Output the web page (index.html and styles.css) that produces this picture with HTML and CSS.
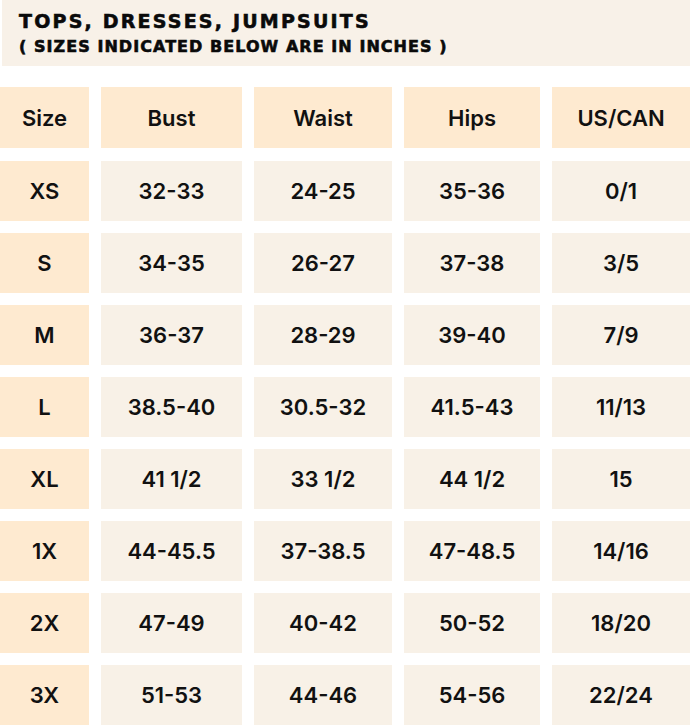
FILE: index.html
```html
<!DOCTYPE html>
<html>
<head>
<meta charset="utf-8">
<link rel="stylesheet" href="styles.css">
</head>
<body>
<div class="page">
  <div class="title">
    <div class="t1">TOPS, DRESSES, JUMPSUITS</div>
    <div class="t2">( SIZES INDICATED BELOW ARE IN INCHES )</div>
  </div>
  <div class="chart">
    <div class="cell head">Size</div><div class="cell head">Bust</div><div class="cell head">Waist</div><div class="cell head">Hips</div><div class="cell head">US/CAN</div>
    <div class="cell size">XS</div><div class="cell">32-33</div><div class="cell">24-25</div><div class="cell">35-36</div><div class="cell">0/1</div>
    <div class="cell size">S</div><div class="cell">34-35</div><div class="cell">26-27</div><div class="cell">37-38</div><div class="cell">3/5</div>
    <div class="cell size">M</div><div class="cell">36-37</div><div class="cell">28-29</div><div class="cell">39-40</div><div class="cell">7/9</div>
    <div class="cell size">L</div><div class="cell">38.5-40</div><div class="cell">30.5-32</div><div class="cell">41.5-43</div><div class="cell">11/13</div>
    <div class="cell size">XL</div><div class="cell">41 1/2</div><div class="cell">33 1/2</div><div class="cell">44 1/2</div><div class="cell">15</div>
    <div class="cell size">1X</div><div class="cell">44-45.5</div><div class="cell">37-38.5</div><div class="cell">47-48.5</div><div class="cell">14/16</div>
    <div class="cell size">2X</div><div class="cell">47-49</div><div class="cell">40-42</div><div class="cell">50-52</div><div class="cell">18/20</div>
    <div class="cell size">3X</div><div class="cell">51-53</div><div class="cell">44-46</div><div class="cell">54-56</div><div class="cell">22/24</div>
  </div>
</div>
</body>
</html>
```

FILE: styles.css
```css
html, body {
  margin: 0;
  padding: 0;
  background: #ffffff;
}
.page {
  width: 690px;
  height: 726px;
  overflow: hidden;
}
.title {
  margin-left: 2px;
  height: 66px;
  box-sizing: border-box;
  background: #f8f1e8;
  padding: 9px 0 0 17px;
  font-family: "DejaVu Sans", sans-serif;
  font-weight: bold;
  color: #0a0a0a;
  -webkit-text-stroke: 0.6px #0a0a0a;
}
.t1 {
  font-size: 19px;
  line-height: 24px;
  letter-spacing: 2.2px;
}
.t2 {
  margin-top: 3px;
  font-size: 16px;
  line-height: 22px;
  letter-spacing: 1.05px;
}
.chart {
  margin-top: 21px;
  display: grid;
  grid-template-columns: 89px 141px 138px 136px 138px;
  grid-template-rows: 62px repeat(8, 60px);
  column-gap: 12px;
  row-gap: 12px;
}
.cell {
  background: #f8f1e7;
  display: flex;
  align-items: center;
  justify-content: center;
  font-family: Inter, "Open Sans", sans-serif;
  font-weight: 600;
  font-size: 22px;
  color: #111111;
}
.cell.head,
.cell.size {
  background: #feead0;
}
.cell.head {
  margin-bottom: 1px;
}
```
